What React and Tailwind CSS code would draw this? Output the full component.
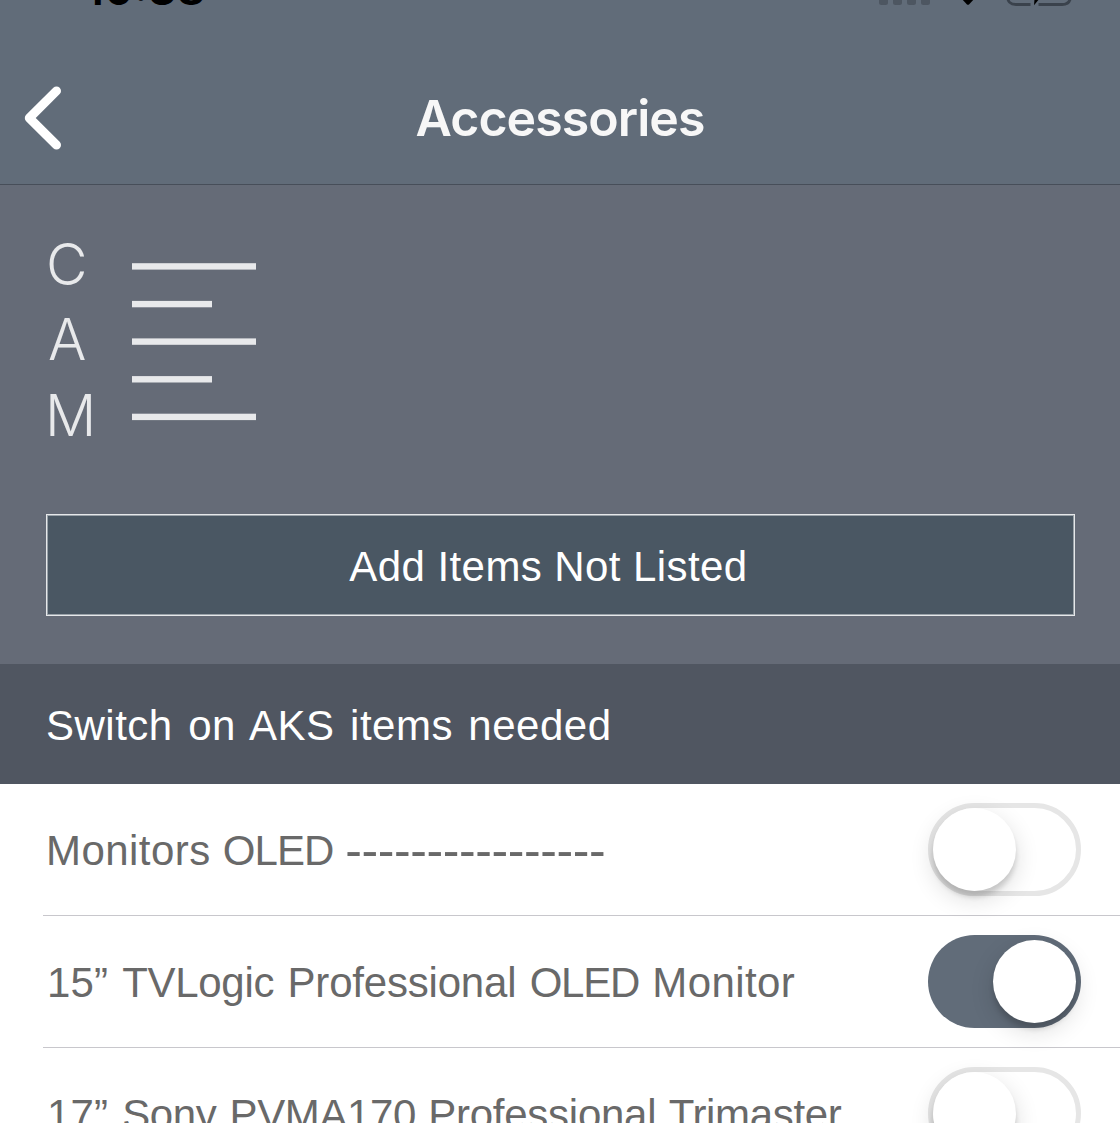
import React from "react";

const items = [
  {
    on: false,
    label: [
      ["Monitors ", "tracking-[0.45px]"],
      ["OLED ", "tracking-[-0.9px]"],
      ["----------------", "ml-px text-[50px] leading-[40px] align-[-2px] tracking-[-0.41px]"],
    ],
  },
  {
    on: true,
    label: [
      ["15” ", "ml-px tracking-[0.2px] mr-[2px]"],
      ["TVLogic ", "tracking-[-0.3px] mr-[2px]"],
      ["Professional ", "tracking-[-0.2px] mr-[2px]"],
      ["OLED ", "tracking-[-1.3px] mr-[3px]"],
      ["Monitor", "tracking-[0.4px]"],
    ],
  },
  {
    on: false,
    label: [
      ["17” ", "ml-px tracking-[0.2px] mr-[2px]"],
      ["Sony ", "tracking-[-0.4px] mr-[2px]"],
      ["PVMA170 ", "tracking-[-0.4px] mr-px"],
      ["Professional ", "tracking-[-0.25px] mr-px"],
      ["Trimaster", "tracking-[-0.35px]"],
    ],
  },
];

function StatusBar() {
  return (
    <div className="flex h-[54px] items-start justify-between overflow-hidden pl-[85px] pr-[48px]">
      <span className="-mt-[43px] text-[45px] leading-[64px] font-semibold text-black">10:38</span>
      <svg className="h-[8px] w-[194px]" viewBox="878 0 194 8" fill="none">
        <g fill="#4d5661">
          <rect x="879" y="-5" width="9" height="10" rx="2.5" />
          <rect x="893" y="-5" width="9" height="10" rx="2.5" />
          <rect x="907" y="-5" width="9" height="10" rx="2.5" />
          <rect x="921" y="-5" width="9" height="10" rx="2.5" />
        </g>
        <path d="M960 -3L967 4.4Q968 5.2 969 4.4L976 -3Z" fill="#000" />
        <path d="M1007.5 -8V-4Q1007.5 4.5 1016 4.5H1030.5M1038.5 4.5H1062Q1070.5 4.5 1070.5 -4V-8" stroke="#3a424c" strokeWidth="2.8" />
        <path d="M1034 5.3L1034.6 -2H1040Z" fill="#000" />
      </svg>
    </div>
  );
}

function Header() {
  return (
    <header className="h-[185px] border-b border-[#474e59] bg-[#616c79]">
      <StatusBar />
      <div className="grid h-[128px] grid-cols-[1fr_auto_1fr] items-center">
        <button aria-label="Back" className="ml-[24px] w-[40px]">
          <svg className="h-[64px] w-[40px]" viewBox="0 0 40 64" fill="none" stroke="#fff" strokeWidth="9" strokeLinecap="round" strokeLinejoin="round">
            <path d="M32.5 4.9L5.3 32L32.5 59" />
          </svg>
        </button>
        <h1 className="text-[50px] leading-[64px] font-semibold tracking-[-0.95px] text-[#f7f7f7]">Accessories</h1>
        <span />
      </div>
    </header>
  );
}

function Logo() {
  return (
    <div className="flex h-[228px] gap-[37px] text-[#e8e9eb]">
      <div className="flex w-[49px] flex-col text-[57px] leading-[75.3px] font-light">
        <span>C</span>
        <span className="ml-[2px]">A</span>
        <span className="-ml-px">M</span>
      </div>
      <svg className="mt-[35px] h-[160px] w-[125px]" viewBox="0 0 125 160" fill="#e8e9eb">
        <rect x="0" y="1.2" width="124" height="6.4" />
        <rect x="0" y="38.9" width="80" height="6.4" />
        <rect x="0" y="76.4" width="124" height="6.4" />
        <rect x="0" y="114.1" width="80" height="6.4" />
        <rect x="0" y="151.7" width="124" height="6.4" />
      </svg>
    </div>
  );
}

function Toggle({ on }) {
  return (
    <div
      role="switch"
      aria-checked={on}
      className={
        on
          ? "flex h-[93px] w-[153px] shrink-0 items-center justify-end rounded-full bg-[#616c79] p-[5px]"
          : "flex h-[93px] w-[153px] shrink-0 items-center rounded-full border-[5px] border-[#e6e6e6]"
      }
    >
      <span className="h-[83px] w-[83px] rounded-full bg-white shadow-[0_8px_24px_rgba(0,0,0,0.14),0_6px_5px_rgba(0,0,0,0.14)]" />
    </div>
  );
}

export default function App() {
  return (
    <div className="h-[1123px] w-[1120px] overflow-hidden bg-white font-['Inter',sans-serif]">
      <Header />
      <section className="h-[479px] bg-[#656b77] pt-[42px] pr-[45px] pl-[46px]">
        <Logo />
        <button className="mt-[59px] flex h-[102px] w-full items-center justify-center border border-[#e6e8ea] bg-[#4a5763] pr-[24px] pt-[3px] font-['Liberation_Sans',sans-serif] text-[42px] text-white shadow-[inset_0_0_0_1px_#9aa2a9]">
          <span className="tracking-[0.42px]">Add Items Not Listed</span>
        </button>
      </section>
      <h2 className="flex h-[120px] items-center bg-[#505661] pt-[3px] pl-[46px] font-['Liberation_Sans',sans-serif] text-[42px] text-white">
        <span className="tracking-[0.5px] [word-spacing:3.3px]">Switch on AKS items needed</span>
      </h2>
      <ul className="font-['Liberation_Sans',sans-serif] text-[42px] text-[#696969]">
        {items.map((item, row) => (
          <li key={row} className="ml-[43px] flex h-[132px] items-center justify-between border-b border-[#c8c7cc] pr-[39px] pl-[3px]">
            <span className="pt-px whitespace-pre">
              {item.label.map(([word, style], i) => (
                <span key={i} className={style}>{word}</span>
              ))}
            </span>
            <Toggle on={item.on} />
          </li>
        ))}
      </ul>
    </div>
  );
}
